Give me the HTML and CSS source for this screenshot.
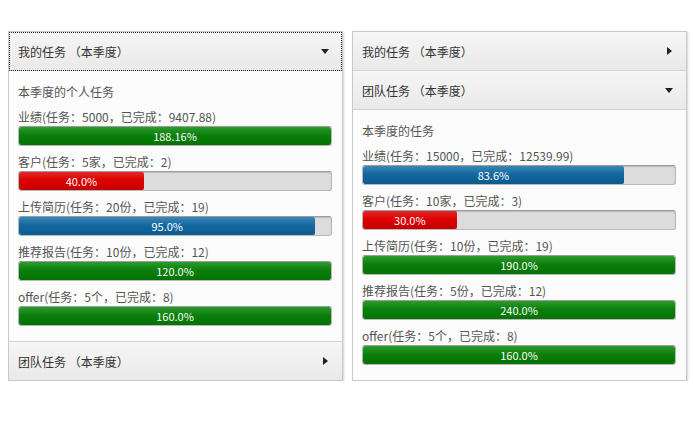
FILE: index.html
```html
<!DOCTYPE html>
<html lang="zh-CN">
<head>
    <meta charset="UTF-8">
    <title>任务进度</title>
    <link rel="stylesheet" href="styles.css">
</head>
<body>
    <div class="board">
        <div class="accordion">
            <div class="acc-head focused">
                <span>我的任务 （本季度）</span>
                <i class="arrow down"></i>
            </div>
            <div class="acc-body">
                <p class="acc-title">本季度的个人任务</p>
                <div class="task">
                    <div class="task-label">业绩(任务：5000，已完成：9407.88)</div>
                    <div class="track"><div class="fill green" style="width:100%">188.16%</div></div>
                </div>
                <div class="task">
                    <div class="task-label">客户(任务：5家，已完成：2)</div>
                    <div class="track"><div class="fill red" style="width:40%">40.0%</div></div>
                </div>
                <div class="task">
                    <div class="task-label">上传简历(任务：20份，已完成：19)</div>
                    <div class="track"><div class="fill blue" style="width:95%">95.0%</div></div>
                </div>
                <div class="task">
                    <div class="task-label">推荐报告(任务：10份，已完成：12)</div>
                    <div class="track"><div class="fill green" style="width:100%">120.0%</div></div>
                </div>
                <div class="task">
                    <div class="task-label">offer(任务：5个，已完成：8)</div>
                    <div class="track"><div class="fill green" style="width:100%">160.0%</div></div>
                </div>
            </div>
            <div class="acc-head">
                <span>团队任务 （本季度）</span>
                <i class="arrow right"></i>
            </div>
        </div>

        <div class="accordion">
            <div class="acc-head">
                <span>我的任务 （本季度）</span>
                <i class="arrow right"></i>
            </div>
            <div class="acc-head">
                <span>团队任务 （本季度）</span>
                <i class="arrow down"></i>
            </div>
            <div class="acc-body">
                <p class="acc-title">本季度的任务</p>
                <div class="task">
                    <div class="task-label">业绩(任务：15000，已完成：12539.99)</div>
                    <div class="track"><div class="fill blue" style="width:83.6%">83.6%</div></div>
                </div>
                <div class="task">
                    <div class="task-label">客户(任务：10家，已完成：3)</div>
                    <div class="track"><div class="fill red" style="width:30%">30.0%</div></div>
                </div>
                <div class="task">
                    <div class="task-label">上传简历(任务：10份，已完成：19)</div>
                    <div class="track"><div class="fill green" style="width:100%">190.0%</div></div>
                </div>
                <div class="task">
                    <div class="task-label">推荐报告(任务：5份，已完成：12)</div>
                    <div class="track"><div class="fill green" style="width:100%">240.0%</div></div>
                </div>
                <div class="task">
                    <div class="task-label">offer(任务：5个，已完成：8)</div>
                    <div class="track"><div class="fill green" style="width:100%">160.0%</div></div>
                </div>
            </div>
        </div>
    </div>
</body>
</html>
```

FILE: styles.css
```css
body {
    margin: 0;
    background: #fff;
    font-family: "Noto Sans CJK SC", "Liberation Sans", sans-serif;
    font-size: 12px;
    color: #555;
}
.board {
    display: flex;
    align-items: flex-start;
    gap: 9px;
    padding: 31px 0 0 8px;
}
.accordion {
    width: 333px;
    border: 1px solid #c9c9c9;
    box-shadow: 1px 1px 2px rgba(0, 0, 0, 0.18);
    background: #fcfcfc;
}
.acc-head {
    height: 38px;
    padding: 0 13px 0 9px;
    display: flex;
    align-items: center;
    justify-content: space-between;
    background: linear-gradient(#f6f6f6, #e9e9e9);
    border-bottom: 1px solid #d2d2d2;
    color: #333;
}
.accordion .acc-head:last-child {
    border-bottom: none;
    border-top: 1px solid #d2d2d2;
}
.acc-head.focused {
    outline: 1px dotted #222;
    outline-offset: -1px;
}
.arrow {
    width: 0;
    height: 0;
    border-style: solid;
}
.arrow.down {
    border-width: 5px 4px 0 4px;
    border-color: #222 transparent transparent transparent;
}
.arrow.right {
    border-width: 4px 0 4px 5px;
    border-color: transparent transparent transparent #222;
    margin-right: 1px;
}
.acc-body {
    padding: 12px 10px 8px 9px;
}
.acc-title {
    margin: 0 0 7px;
    line-height: 18px;
}
.task {
    margin-bottom: 7px;
}
.task-label {
    line-height: 18px;
}
.track {
    height: 18px;
    border: 1px solid #b8b8b8;
    border-top-color: #9c9c9c;
    border-radius: 3px;
    background: #dcdcdc;
    box-shadow: inset 0 1px 1px rgba(0, 0, 0, 0.15);
    overflow: hidden;
}
.fill {
    height: 100%;
    border-radius: 2px;
    color: #fff;
    font-size: 11px;
    line-height: 18px;
    text-align: center;
    white-space: nowrap;
}
.green {
    background: linear-gradient(#2e9b2e, #0b7f0b 45%, #007200);
}
.blue {
    background: linear-gradient(#3a86b8, #14689e 45%, #0b5b90);
}
.red {
    background: linear-gradient(#e22a2a, #d00 45%, #c40000);
}
```
